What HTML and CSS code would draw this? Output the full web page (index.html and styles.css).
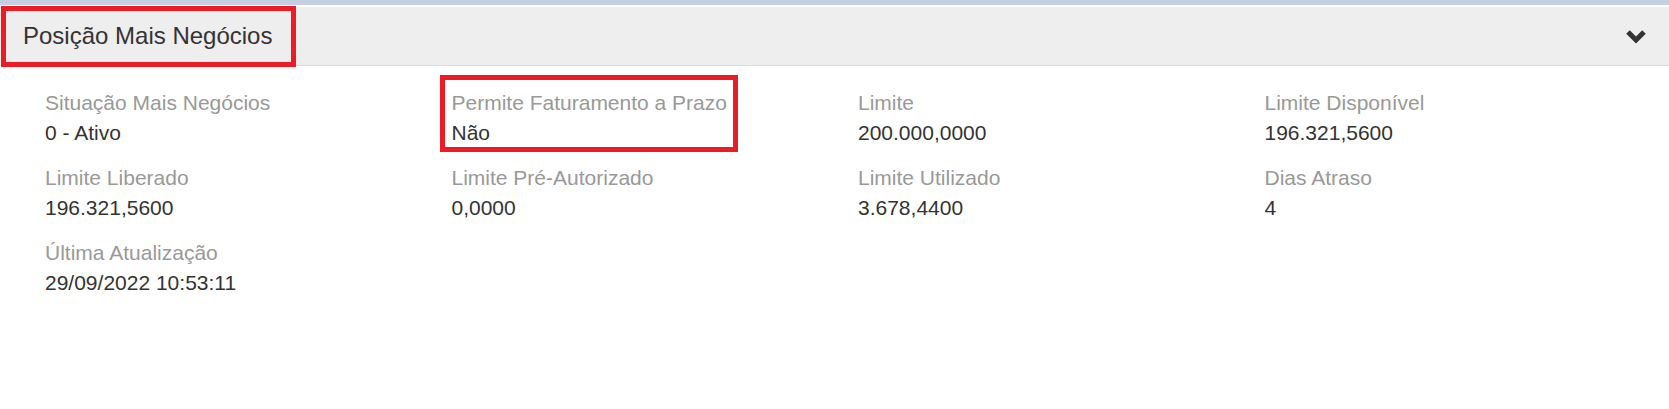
FILE: index.html
```html
<!DOCTYPE html>
<html lang="pt">
<head>
<meta charset="utf-8">
<title>Posição Mais Negócios</title>
<link rel="stylesheet" href="styles.css">
</head>
<body>
<div class="topbar"></div>
<div class="panel">
  <div class="panel-heading">
    <span class="panel-title">Posição Mais Negócios</span>
    <svg class="chevron" width="22" height="16" viewBox="0 0 22 16"><polyline points="3,3 11,11 19,3" fill="none" stroke="#333" stroke-width="5"/></svg>
    <div class="mark mark-title"></div>
  </div>
  <div class="panel-body">
    <div class="grid">
      <div class="field"><div class="label">Situação Mais Negócios</div><div class="value">0 - Ativo</div></div>
      <div class="field"><div class="label">Permite Faturamento a Prazo</div><div class="value">Não</div></div>
      <div class="field"><div class="label">Limite</div><div class="value">200.000,0000</div></div>
      <div class="field"><div class="label">Limite Disponível</div><div class="value">196.321,5600</div></div>
      <div class="field"><div class="label">Limite Liberado</div><div class="value">196.321,5600</div></div>
      <div class="field"><div class="label">Limite Pré-Autorizado</div><div class="value">0,0000</div></div>
      <div class="field"><div class="label">Limite Utilizado</div><div class="value">3.678,4400</div></div>
      <div class="field"><div class="label">Dias Atraso</div><div class="value">4</div></div>
      <div class="field"><div class="label">Última Atualização</div><div class="value">29/09/2022 10:53:11</div></div>
    </div>
    <div class="mark mark-field"></div>
  </div>
</div>
</body>
</html>
```

FILE: styles.css
```css
html, body {
  margin: 0;
  padding: 0;
  background: #fff;
}
body {
  font-family: "Liberation Sans", Arial, sans-serif;
  color: #333;
  width: 1669px;
  height: 409px;
  overflow: hidden;
}
.topbar {
  height: 5px;
  background: #c5cfe1;
  margin-bottom: 2px;
}
.panel {
  position: relative;
}
.panel-heading {
  position: relative;
  height: 58px;
  background: #eeeeee;
  border-bottom: 1px solid #dcdcdc;
  display: flex;
  align-items: center;
  justify-content: space-between;
  padding: 0 22px 0 23px;
}
.panel-title {
  font-size: 24px;
  color: #333;
}
.chevron {
  display: block;
  margin-top: 2px;
}
.panel-body {
  position: relative;
  padding: 22px 13px 0 30px;
}
.grid {
  display: grid;
  grid-template-columns: repeat(4, 1fr);
  row-gap: 15px;
}
.field {
  padding: 0 15px;
  font-size: 21px;
  line-height: 30px;
}
.label {
  color: #999;
}
.value {
  color: #333;
}
.mark {
  position: absolute;
  border: 5px solid #ed1c24;
  box-sizing: border-box;
  pointer-events: none;
}
.mark-title {
  left: 1px;
  top: -1px;
  width: 295px;
  height: 61px;
}
.mark-field {
  left: 440px;
  top: 9px;
  width: 298px;
  height: 77px;
}
```
